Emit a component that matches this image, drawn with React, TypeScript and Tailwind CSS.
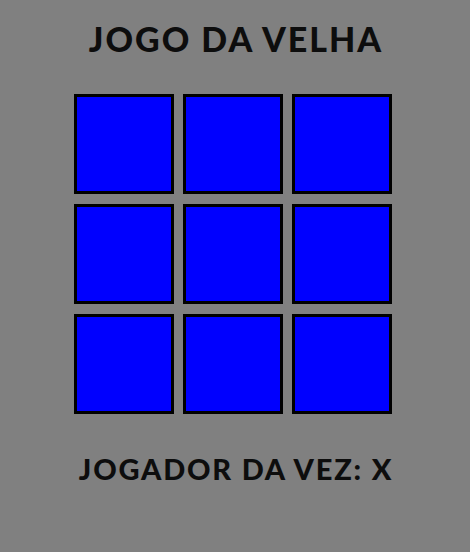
const cells = Array.from({ length: 9 }, (_, i) => i)

export default function App() {
  return (
    <div className="flex h-[552px] w-[470px] flex-col items-center bg-[#808080] font-['Lato',sans-serif] text-[#0d0d0d]">
      <h1 className="mt-[19px] pl-[2px] text-[34px] font-black leading-[40px] tracking-[2px]">JOGO DA VELHA</h1>
      <div className="ml-[-4px] mt-[35px] grid grid-cols-[repeat(3,100px)] gap-x-[9px] gap-y-[10px]">
        {cells.map((i) => (
          <button key={i} type="button" className="h-[100px] w-[100px] border-[3px] border-black bg-[#0000ff]" />
        ))}
      </div>
      <p className="mt-[38px] pl-[2px] text-[29px] font-black leading-[34px] tracking-[1.8px]">JOGADOR DA VEZ: X</p>
    </div>
  )
}
